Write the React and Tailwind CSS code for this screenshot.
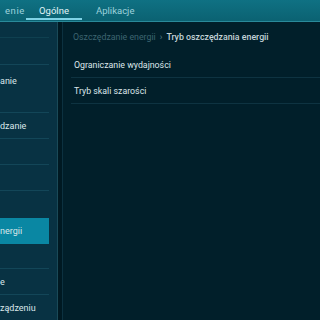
export default function App() {
  const font = { fontFamily: 'Roboto, "Noto Sans", sans-serif' };
  return (
    <div className="w-[320px] h-[320px] overflow-hidden flex flex-col bg-[#011f2a]" style={font}>
      <div className="h-[22px] shrink-0 flex items-stretch bg-gradient-to-b from-[#0f7183] to-[#0b6272] border-b border-[#2a8a9a] text-[9.5px] text-[#9fd2dc]">
        <div className="w-[26px] flex items-center pt-[2px] justify-end whitespace-nowrap">
          <span className="pr-[1px] tracking-[0.6px]">enie</span>
        </div>
        <div className="w-[56px] flex items-center pt-[2px] justify-center relative text-[#e2f4f7]">
          Ogólne
          <div className="absolute left-0 right-0 bottom-[1px] h-[2px] bg-[#7fd3e6]" />
        </div>
        <div className="w-[14px]" />
        <div className="flex items-center pt-[2px]">Aplikacje</div>
      </div>
      <div className="flex-1 flex">
        <div className="w-[57px] shrink-0 bg-[#083243] flex flex-col text-[9px] text-[#dbe7ea]">
          <div className="h-[16px] border-b border-[#0f4050] w-[49px]" />
          <div className="h-[27px] border-b border-[#134658] w-[49px]" />
          <div className="h-[48px] border-b border-[#134658] w-[49px] flex items-start pt-[10px] whitespace-nowrap">
            <span>anie</span>
          </div>
          <div className="h-[26px] border-b border-[#134658] w-[49px] flex items-center pt-[3px] whitespace-nowrap">
            <span>dzanie</span>
          </div>
          <div className="h-[26px] border-b border-[#134658] w-[49px]" />
          <div className="h-[26px] border-b border-[#134658] w-[49px]" />
          <div className="h-[27px] w-[49px]" />
          <div className="h-[26px] w-[49px] bg-[#0a87a3] flex items-center pt-[1px] whitespace-nowrap">
            <span>nergii</span>
          </div>
          <div className="h-[25px] border-b border-[#134658] w-[49px]" />
          <div className="h-[26px] border-b border-[#134658] w-[49px] flex items-center pt-[2px] whitespace-nowrap">
            <span>e</span>
          </div>
          <div className="h-[26px] w-[49px] flex items-center pt-[2px] whitespace-nowrap">
            <span>ządzeniu</span>
          </div>
        </div>
        <div className="w-[1px] bg-[#1a4a58]" />
        <div className="w-[4px] bg-[#001922]" />
        <div className="w-[1px] bg-[#0c3140]" />
        <div className="flex-1 flex flex-col pl-[8px] text-[8.8px]">
          <div className="h-[30px] flex items-center whitespace-nowrap pt-[1px]">
            <span className="text-[#3d6571] pl-[2px]">Oszczędzanie energii</span>
            <span className="text-[#5a808b] mx-[4px]">›</span>
            <span className="text-[#c3d3d8] font-medium">Tryb oszczędzania energii</span>
          </div>
          <div className="h-[26px] flex items-center pt-[3px] border-b border-[#0e3341] text-[#dde7ea] pl-[3px]">Ograniczanie wydajności</div>
          <div className="h-[26px] flex items-center pt-[3px] border-b border-[#0e3341] text-[#dde7ea] pl-[3px]">Tryb skali szarości</div>
        </div>
      </div>
    </div>
  );
}
